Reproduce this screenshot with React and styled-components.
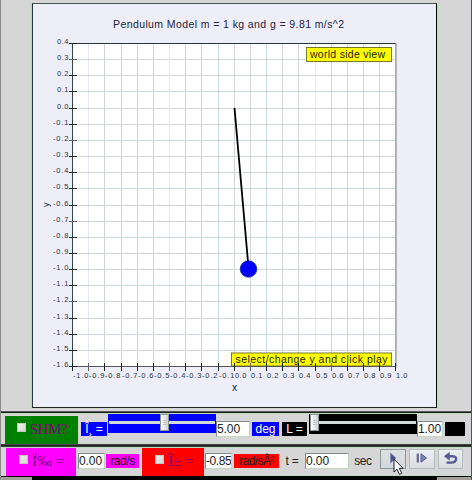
import React from 'react';
import styled, { createGlobalStyle, css } from 'styled-components';

const GlobalStyle = createGlobalStyle`
  * { box-sizing: border-box; }
  body { margin: 0; background: #d6d6d6; font-family: "Liberation Sans", Arial, sans-serif; }
`;

const Window = styled.main`
  position: relative;
  display: flex;
  flex-direction: column;
  width: 472px;
  height: 480px;
  overflow: hidden;
  background: #d6d6d6;
  border-left: 1px solid #8a8a8a;
  border-right: 1px solid #4c5656;
`;

const PlotArea = styled.section`
  height: 411px;
  padding: 3px 0 0 31px;
  flex: none;
`;

const PlotPanel = styled.div`
  width: 405px;
  height: 405px;
  background: #eeeef8;
  border: 1px solid #000;
  border-top-color: #465252;
  border-left-color: #263838;
  border-bottom-color: #222;
  box-shadow: -1px 0 #bdd6bf, -2px 0 #c9d6ca, 1px 0 #c3dfc3, 2px 0 #c3dfc3;
`;

const Chart = styled.svg`
  display: block;
  margin: -1px;
  font-family: "Liberation Sans", Arial, sans-serif;
`;

const Divider = styled.div`
  flex: none;
  height: ${(p) => p.$h}px;
  background: linear-gradient(${(p) => p.$colors});
`;

const ControlRow = styled.section`
  display: flex;
  flex: none;
  height: ${(p) => p.$h}px;
  align-items: flex-start;
  border-top: 1px solid #bedabe;
  border-bottom: 1px solid #c6d8c6;
`;

const block = css`
  flex: none;
  width: ${(p) => p.$w}px;
  margin-left: ${(p) => p.$gap || 0}px;
  margin-top: ${(p) => p.$top || 0}px;
`;

const Toggle = styled.label`
  ${block}
  display: flex;
  align-items: center;
  height: ${(p) => p.$h}px;
  padding-left: ${(p) => p.$pad}px;
  gap: 4px;
  background: ${(p) => p.$bg};
  color: #800080;
  font: 15px "Liberation Serif", "Times New Roman", serif;
  letter-spacing: ${(p) => p.$track || 0}px;
  line-height: 15px;
  padding-bottom: ${(p) => p.$lift || 0}px;
  white-space: nowrap;
`;

const CheckBox = styled.span`
  flex: none;
  width: 9px;
  height: 9px;
  margin-top: -4px;
  border: 1px solid #c5cac2;
  background: linear-gradient(135deg, #f5f5f2, #d2d4d2);
`;

const Tag = styled.span`
  ${block}
  display: flex;
  align-items: center;
  justify-content: center;
  height: 14px;
  background: ${(p) => p.$bg};
  color: ${(p) => p.$fg || '#fff'};
  font-size: 12px;
  letter-spacing: ${(p) => p.$track || 0}px;
  white-space: pre;
`;

const Field = styled.input`
  ${block}
  height: 16px;
  padding: 0;
  border: 1px solid #c5d6c5;
  border-top-color: #7f8a8a;
  border-left-color: #7f8a8a;
  border-radius: 0;
  background: #fff;
  color: #222;
  font: 12px "Liberation Sans", Arial, sans-serif;
  letter-spacing: ${(p) => p.$track ?? -0.1}px;
  outline: none;
`;

const SliderBox = styled.div`
  ${block}
  display: flex;
  height: ${(p) => p.$h}px;
  background: ${(p) => p.$bg};
`;

const Track = styled.div`
  width: 100%;
  height: 3px;
  margin: 7px 1px 0;
  background: #d4d8d6;
`;

const Thumb = styled.div`
  display: flex;
  flex-direction: column;
  justify-content: center;
  align-items: center;
  gap: 1px;
  width: 9px;
  height: 17px;
  margin: -7px 0 0 ${(p) => p.$at}px;
  border: 1px solid #8c9696;
  background: linear-gradient(90deg, #fff, #ced4d6);
`;

const Grip = styled.i`
  width: 4px;
  height: 1px;
  background: #bcc4c4;
`;

const PlayerButton = styled.button`
  ${block}
  display: grid;
  place-items: center;
  height: 20px;
  padding: 0 0 2px;
  border: 1px solid ${(p) => (p.$hot ? '#8b9696' : '#b5bdbf')};
  border-radius: 0;
  background: ${(p) => (p.$hot ? 'linear-gradient(#dce2e0, #d2d6de)' : 'linear-gradient(#ebf0f2, #d9dbe0)')};
`;

const Pointer = styled.svg`
  position: absolute;
  left: 391px;
  top: 458px;
`;

const Footer = styled.footer`
  height: 3px;
  padding: 0 34px 0 31px;
  background: #a29e98;
  &::before { content: ""; display: block; height: 3px; background: #000; }
`;

const steps = Array.from({ length: 21 }, (_, i) => i);
const gx = (i) => Math.round(40 + i * 16.17) + 0.5;
const gy = (i) => Math.round(40 + i * 16.15) + 0.5;

function Plot() {
  return (
    <Chart width="405" height="405" viewBox="0 0 405 405">
      <rect x="40" y="40" width="324" height="324" fill="#fff" />
      {steps.map((i) => (
        <g key={i} stroke={i % 3 === 0 ? '#ccd9dc' : '#d3d6d6'}>
          <path d={`M${gx(i)} 40V363`} stroke={i === 1 || i === 6 || i === 15 ? '#e4e8f4' : undefined} />
          <path d={`M40 ${gy(i)}H364`} />
        </g>
      ))}
      <path d="M202.5 105L216 259" stroke="#000" strokeWidth="1.8" />
      <circle cx="216.5" cy="266" r="8.3" fill="#0000fe" stroke="#001080" strokeWidth=".6" />
      <g fill="#ff0" stroke="#77772b">
        <rect x="274.5" y="44.5" width="85" height="14" />
        <rect x="199.5" y="350" width="160" height="13" />
      </g>
      <g fill="none">
        <path d="M40 40.5H364" stroke="#253636" />
        <path d="M40.5 40V364" stroke="#344545" />
        <path d="M364 40V364" stroke="#999" strokeWidth="1.3" />
        <path d="M40 363.5H364" stroke="#555" />
      </g>
      {steps.map((i) => (
        <g key={i} stroke={i % 5 === 1 ? '#655f67' : '#1b2424'}>
          <path d={`M37 ${gy(i)}H45`} />
          <path d={`M${gx(i)} 360V368`} />
        </g>
      ))}
      <g fill="#2a3444" fontSize="7.5">
        {steps.map((i) => {
          const y = ((4 - i) / 10).toFixed(1);
          const yw = y[0] === '-' ? 15.5 : 11.5;
          const x = ((i - 10) / 10).toFixed(1);
          const xw = x[0] === '-' ? 15.5 : 11.5;
          return (
            <g key={i}>
              <text x={36.5 - yw} y={gy(i) + 0.9 - i * 0.04} textLength={yw}>{y}</text>
              <text x={gx(i) + 0.5} y="375.3" textLength={xw}>{x}</text>
            </g>
          );
        })}
      </g>
      <g fill="#22223a" fontSize="10.5">
        <text x="81" y="25" textLength="231">Pendulum Model m = 1 kg and g = 9.81 m/s^2</text>
        <text x="200" y="388">x</text>
        <text transform="translate(17 204) rotate(-90)" fontSize="9">y</text>
        <text x="278" y="55" textLength="75" fill="#222200">world side view</text>
        <text x="203.5" y="360" textLength="152" fill="#222200">select/change y and click play</text>
      </g>
    </Chart>
  );
}

function Slider({ at, ...rest }) {
  return (
    <SliderBox {...rest}>
      <Track><Thumb $at={at}><Grip /><Grip /><Grip /></Thumb></Track>
    </SliderBox>
  );
}

function PlayIcon() {
  return (
    <svg width="16" height="12" viewBox="0 0 16 12">
      <path d="M5.5 1L11 6L5.5 11Z" fill="#4c5090" stroke="#8088b4" strokeWidth=".7" />
    </svg>
  );
}

function StepIcon() {
  return (
    <svg width="16" height="12" viewBox="0 0 16 12">
      <path d="M3.8 1.5V10.5" stroke="#62679c" strokeWidth="2.2" />
      <path d="M7 1.8L12.5 6L7 10.2Z" fill="#7c84b8" stroke="#535890" />
    </svg>
  );
}

function ResetIcon() {
  return (
    <svg width="16" height="14" viewBox="0 0 16 14">
      <path d="M4 5.2H9.5C12.6 5.2 13.6 7 12.9 8.9C12.3 10.7 10.6 11.6 8.5 11.6H3.5" fill="none" stroke="#555b94" strokeWidth="2.4" />
      <path d="M1 5.2L6.7 .7V9.7Z" fill="#555b94" />
    </svg>
  );
}

export default function App() {
  return (
    <>
      <GlobalStyle />
      <Window>
        <PlotArea><PlotPanel><Plot /></PlotPanel></PlotArea>
        <Divider $h={2} $colors="#777, #000" />
        <ControlRow $h={31}>
          <Toggle $w={73} $h={28} $gap={4} $top={2} $bg="#008000" $pad={12} $track={-0.5} $lift={2}>
            <CheckBox />SHM?
          </Toggle>
          <Tag $w={26} $gap={3} $top={8} $bg="#0000fe">Î¸ =</Tag>
          <Slider $w={108} $h={19} $gap={1} $bg="#0000fe" at={51} />
          <Field $w={34} $top={7} defaultValue="5.00" />
          <Tag $w={27} $gap={2} $top={8} $bg="#0000fe">deg</Tag>
          <Tag $w={25} $gap={3} $top={8} $bg="#000">L =</Tag>
          <Slider $w={108} $h={20} $gap={2} $bg="#000" at={0} />
          <Field $w={26} $top={7} defaultValue="1.00" />
          <Tag $w={20} $gap={2} $top={8} $bg="#000" />
        </ControlRow>
        <Divider $h={3} $colors="#555, #222, #444" />
        <ControlRow $h={29}>
          <Toggle $w={70} $h={28} $gap={5} $bg="#f0f" $pad={13} $lift={2}><CheckBox />Ï‰ =</Toggle>
          <Field $w={27} $gap={2} $top={5} defaultValue="0.00" />
          <Tag $w={33} $gap={1} $top={6} $bg="#f0f" $fg="#222" $track={-0.4}>rad/s</Tag>
          <Toggle $w={62} $h={28} $gap={3} $bg="#f00" $pad={13} $lift={2}><CheckBox />Î± =</Toggle>
          <Field $w={27} $gap={1} $top={5} $track={-0.4} defaultValue="-0.85" />
          <Tag $w={45} $gap={2} $top={6} $bg="#f00" $fg="#222" $track={-0.6}>rad/sÂ²</Tag>
          <Tag $w={20} $gap={3} $top={6} $fg="#222" $track={-0.3}>t =</Tag>
          <Field $w={44} $gap={3} $top={5} defaultValue="0.00" />
          <Tag $w={20} $gap={4} $top={6} $fg="#222" $track={-0.4}>sec</Tag>
          <PlayerButton $w={26} $gap={7} $top={1} $hot aria-label="Play"><PlayIcon /></PlayerButton>
          <PlayerButton $w={26} $gap={3} $top={1} aria-label="Step"><StepIcon /></PlayerButton>
          <PlayerButton $w={25} $gap={3} $top={1} aria-label="Reset"><ResetIcon /></PlayerButton>
        </ControlRow>
        <Divider $h={1} $colors="#000, #000" />
        <Footer />
        <Pointer width="14" height="19" viewBox="0 0 14 19">
          <path d="M2 1V14L5 11.2L7.5 16.5L9.7 15.4L7.3 10.3H11Z" fill="#fff" stroke="#222" strokeWidth="1" />
        </Pointer>
      </Window>
    </>
  );
}
